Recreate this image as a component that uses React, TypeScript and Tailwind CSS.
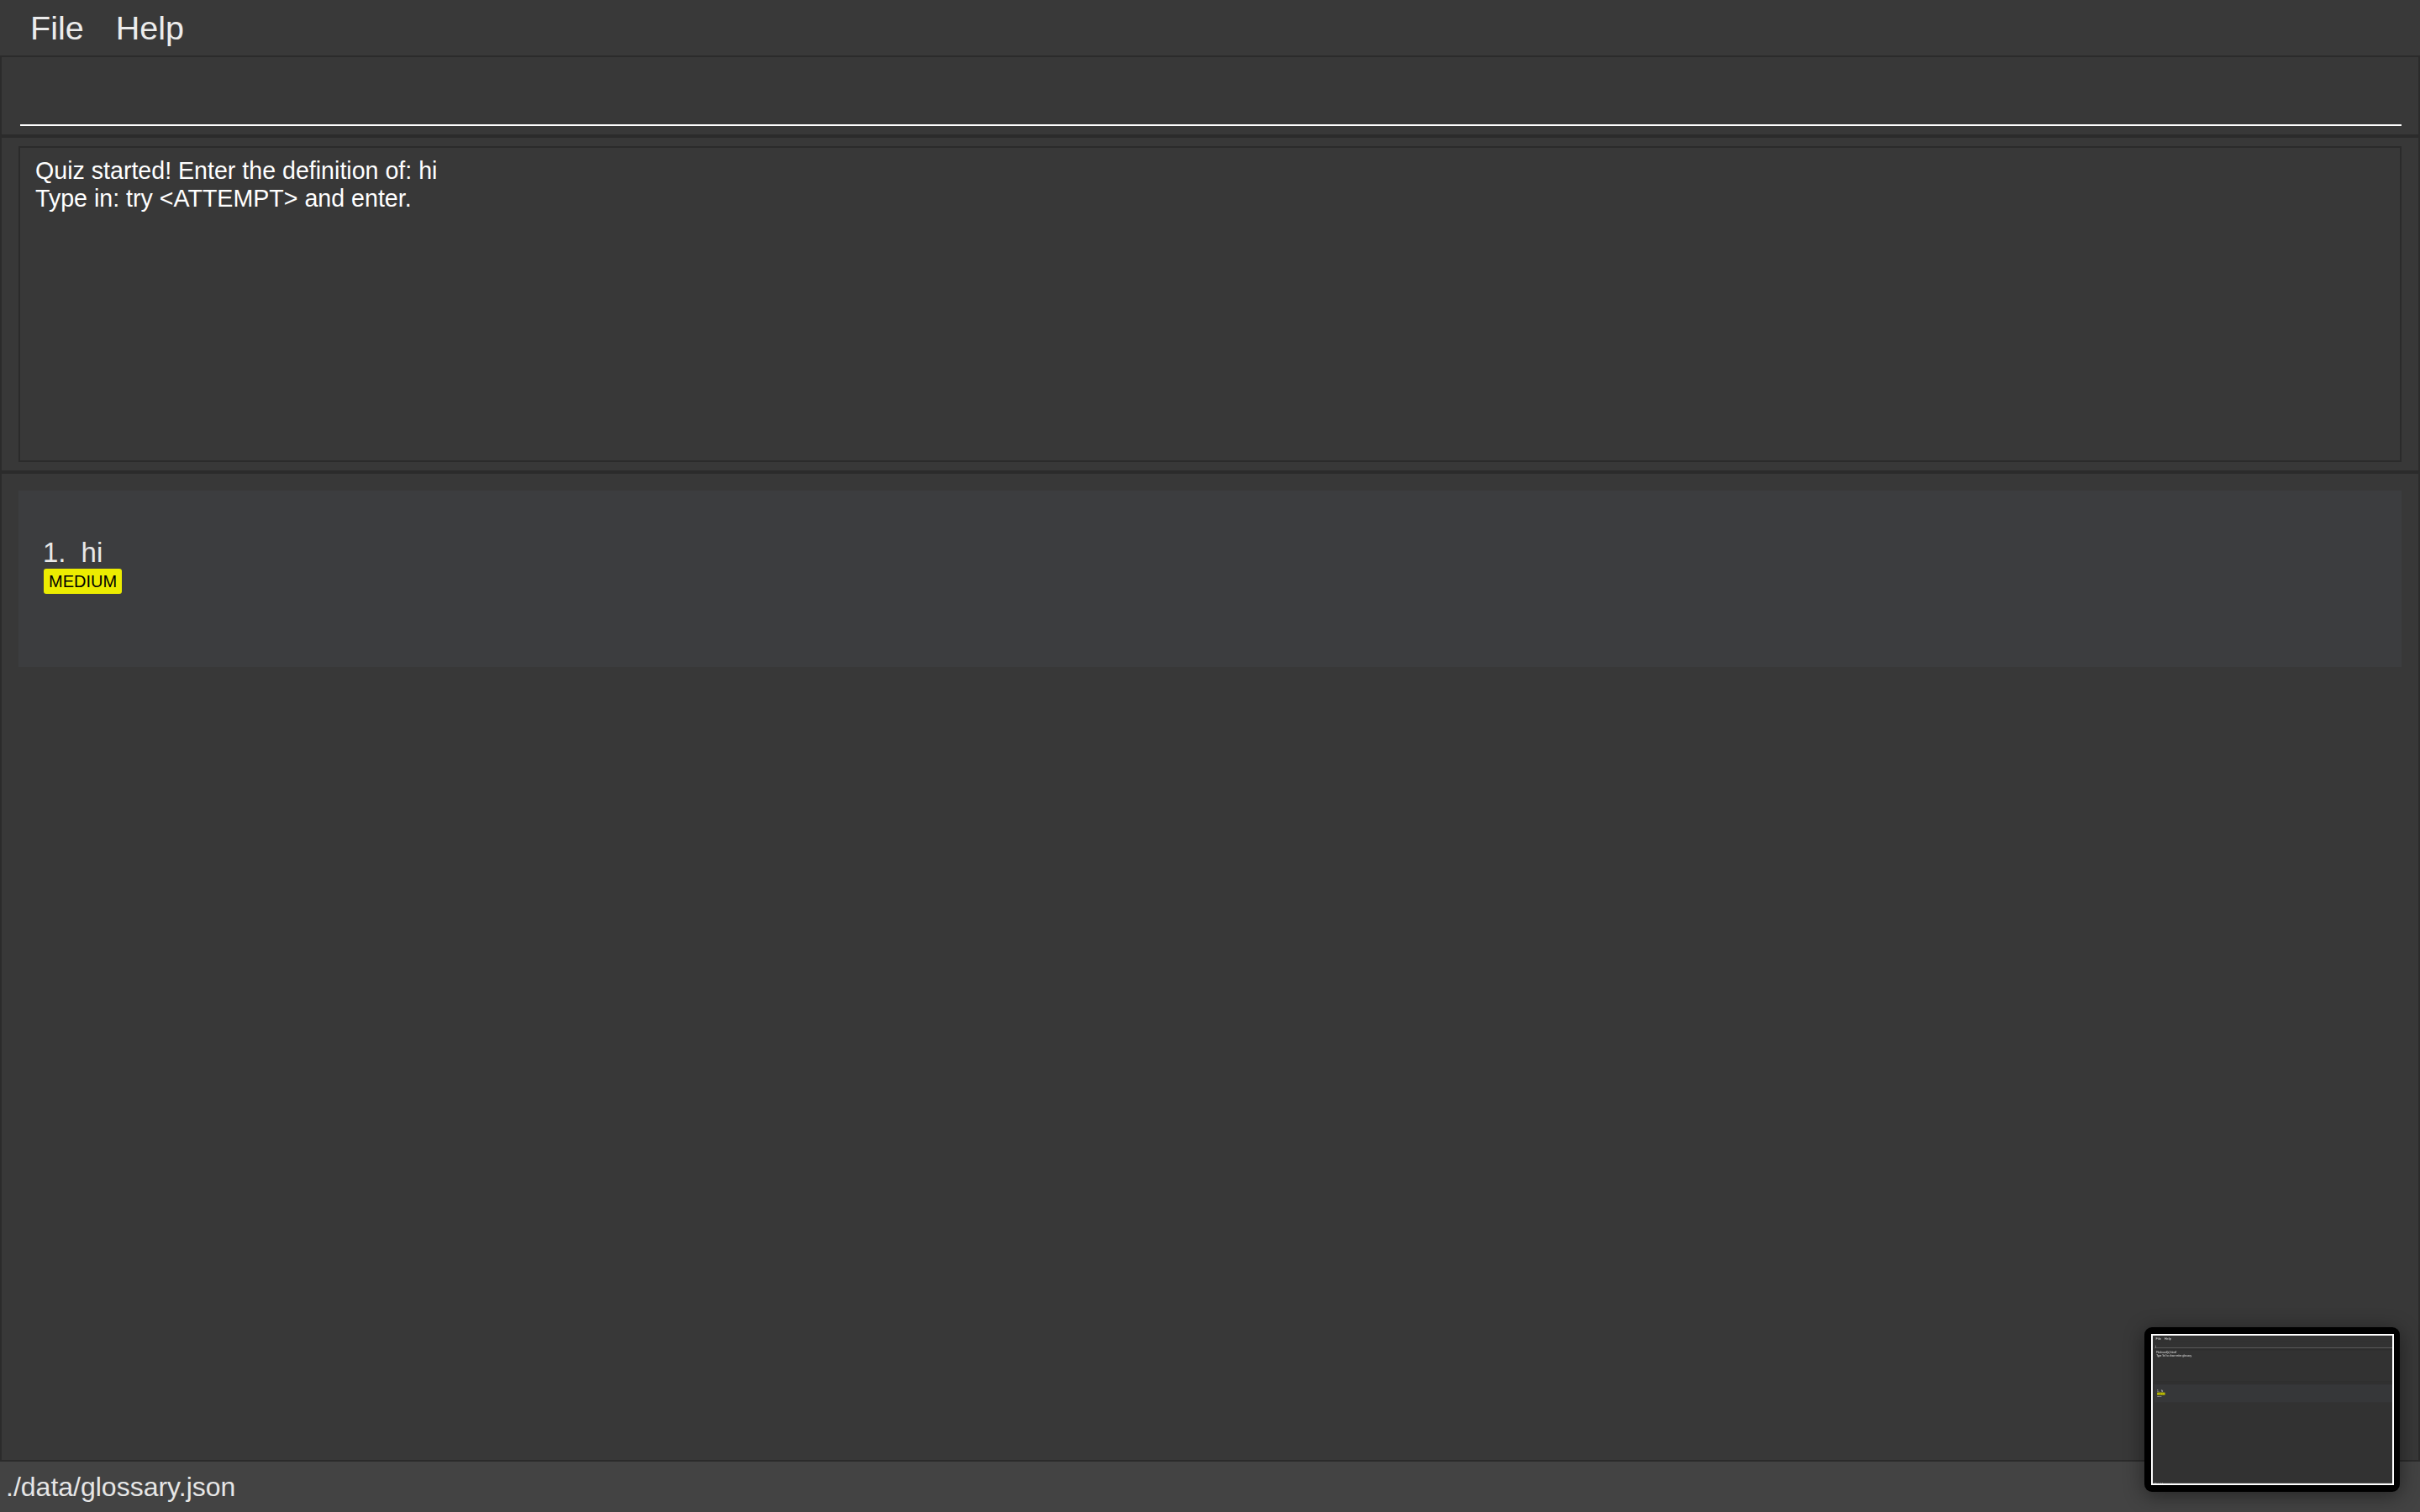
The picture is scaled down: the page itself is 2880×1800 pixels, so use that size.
import React from "react";

type ScreenProps = {
  lines: string[];
  definition?: string;
  cursor?: boolean;
};

function Screen({ lines, definition, cursor }: ScreenProps) {
  return (
    <div
      className="flex flex-col w-[2880px] h-[1800px] bg-[#383838] text-[#eeeeee]"
      style={{ fontFamily: '"Liberation Sans", Arial, sans-serif' }}
    >
      {/* Menu bar */}
      <div className="flex items-center h-[66px] shrink-0 bg-[#393939] pl-[36px] gap-[38px] text-[39.5px] leading-[40px] text-[#ececec]">
        <span>File</span>
        <span>Help</span>
      </div>
      <div className="h-[2px] shrink-0 bg-[#2b2b2b]" />

      {/* Body with side borders */}
      <div className="flex flex-col flex-1 border-x-2 border-[#2b2b2b] min-h-0">
        {/* Command box */}
        <div className="h-[92px] shrink-0 flex flex-col justify-end px-[20px] pb-[10px]">
          <div className="relative h-[40px] ml-[2px] border-b-2 border-white">
            {cursor && (
              <div className="absolute left-[8px] top-[6px] w-[3px] h-[30px] bg-white" />
            )}
          </div>
        </div>
        <div className="h-[4px] shrink-0 bg-[#2b2b2b]" />

        {/* Result display */}
        <div className="h-[396px] shrink-0 px-[20px] py-[10px] flex">
          <div className="flex-1 border-2 border-[#2b2b2b] pl-[18px] pt-[11px] text-[28.6px] leading-[32.5px] text-white">
            {lines.map((l, i) => (
              <div key={i} className="whitespace-pre">
                {l}
              </div>
            ))}
          </div>
        </div>
        <div className="h-[4px] shrink-0 bg-[#2b2b2b]" />

        {/* List panel */}
        <div className="flex-1 px-[20px] pt-[20px] min-h-0">
          <div className="h-[210px] bg-[#3c3d3f] pl-[30px] pt-[55px]">
            <div className="flex items-baseline -ml-[1px] text-[33px] leading-[38px] text-[#e8e8e8]">
              <span>1.</span>
              <span className="ml-[18px]">hi</span>
            </div>
            <div className="flex">
              <span className="h-[30px] leading-[30px] px-[6px] rounded-[3px] bg-[#ecec00] text-black text-[20px]">
                MEDIUM
              </span>
            </div>
            {definition && (
              <div className="text-[24px] leading-[30px] text-[#e8e8e8] mt-[2px]">
                {definition}
              </div>
            )}
          </div>
        </div>
      </div>
      <div className="h-[2px] shrink-0 bg-[#2b2b2b]" />

      {/* Status bar */}
      <div className="h-[60px] shrink-0 flex items-center bg-[#434343] pl-[7px] text-[32px] text-[#e6e6e6]">
        ./data/glossary.json
      </div>
    </div>
  );
}

export default function App() {
  return (
    <div className="relative w-[2880px] h-[1800px] overflow-hidden">
      <Screen
        lines={[
          "Quiz started! Enter the definition of: hi",
          "Type in: try <ATTEMPT> and enter.",
        ]}
      />

      {/* Floating screenshot thumbnail */}
      <div className="absolute right-[24px] bottom-[24px] w-[304px] h-[196px] bg-black rounded-[9px] p-[8px] shadow-[0_4px_24px_rgba(0,0,0,0.45)]">
        <div className="relative w-[289px] h-[180px] border-2 border-white overflow-hidden bg-[#383838]">
          <div className="absolute left-0 top-0 origin-top-left scale-[0.1] brightness-90">
            <Screen
              lines={[
                "Flashcard(s) listed!",
                "Type 'list' to show entire glossary.",
              ]}
              definition="hello"
              cursor
            />
          </div>
        </div>
      </div>
    </div>
  );
}
